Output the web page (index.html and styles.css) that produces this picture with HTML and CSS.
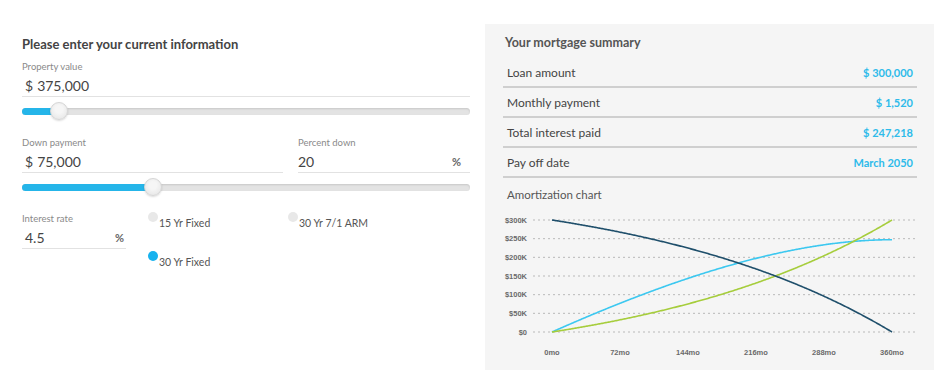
FILE: index.html
```html
<!DOCTYPE html>
<html lang="en">
<head>
  <meta charset="UTF-8">
  <title>Mortgage Calculator</title>
  <link rel="stylesheet" href="styles.css">
</head>
<body>
  <div class="page">

    <!-- Inputs -->
    <section class="form">
      <h2 class="form-title">Please enter your current information</h2>

      <div class="field">
        <label class="field-label">Property value</label>
        <div class="field-value"><span class="cur">$</span> 375,000</div>
      </div>
      <div class="slider">
        <div class="slider-track">
          <div class="slider-fill" style="width: 37px"></div>
        </div>
        <div class="slider-thumb" style="left: 37px"></div>
      </div>

      <div class="field-row">
        <div class="field down-field">
          <label class="field-label">Down payment</label>
          <div class="field-value"><span class="cur">$</span> 75,000</div>
        </div>
        <div class="field percent-field">
          <label class="field-label">Percent down</label>
          <div class="field-value">20 <span class="unit">%</span></div>
        </div>
      </div>
      <div class="slider">
        <div class="slider-track">
          <div class="slider-fill" style="width: 131px"></div>
        </div>
        <div class="slider-thumb" style="left: 131px"></div>
      </div>

      <div class="rate-row">
        <div class="field rate-field">
          <label class="field-label">Interest rate</label>
          <div class="field-value">4.5 <span class="unit">%</span></div>
        </div>
        <div class="options">
          <div class="option"><span class="dot"></span>15 Yr Fixed</div>
          <div class="option"><span class="dot"></span>30 Yr 7/1 ARM</div>
          <div class="option"><span class="dot on"></span>30 Yr Fixed</div>
        </div>
      </div>
    </section>

    <!-- Summary -->
    <section class="summary">
      <h3 class="summary-title">Your mortgage summary</h3>
      <div class="sum-row"><span>Loan amount</span><b>$ 300,000</b></div>
      <div class="sum-row"><span>Monthly payment</span><b>$ 1,520</b></div>
      <div class="sum-row"><span>Total interest paid</span><b>$ 247,218</b></div>
      <div class="sum-row"><span>Pay off date</span><b>March 2050</b></div>

      <h3 class="chart-title">Amortization chart</h3>
      <svg class="chart" id="chart" width="414" height="158" viewBox="503 206 414 158"></svg>
    </section>

  </div>

  <script>
    const svg = document.getElementById('chart');
    const NS = 'http://www.w3.org/2000/svg';
    const x0 = 552, x1 = 892, yTop = 220, yBot = 332;

    function add(tag, attrs, text) {
      const el = document.createElementNS(NS, tag);
      for (const k in attrs) el.setAttribute(k, attrs[k]);
      if (text) el.textContent = text;
      svg.appendChild(el);
      return el;
    }

    // grid + y labels
    const yLabels = ['$0', '$50K', '$100K', '$150K', '$200K', '$250K', '$300K'];
    yLabels.forEach((t, i) => {
      const y = yBot - i * (yBot - yTop) / 6;
      add('line', { x1: 533, x2: 915, y1: y, y2: y, class: 'grid' });
      add('text', { x: 527, y: y + 2.6, class: 'ylab' }, t);
    });

    // x labels
    for (let i = 0; i <= 5; i++) {
      const x = x0 + i * (x1 - x0) / 5;
      add('text', { x: x, y: 355, class: 'xlab' }, (i * 72) + 'mo');
    }

    // amortization: 300k, 4.5%, 30 yrs
    const P = 300000, r = 0.045 / 12, n = 360;
    const M = P * r / (1 - Math.pow(1 + r, -n));
    let bal = P, interest = 0;
    const pts = { bal: [], int: [], prin: [] };
    const px = k => x0 + k / n * (x1 - x0);
    const py = v => yBot - v / 300000 * (yBot - yTop);
    for (let k = 0; k <= n; k++) {
      pts.bal.push(px(k) + ',' + py(bal));
      pts.int.push(px(k) + ',' + py(interest));
      pts.prin.push(px(k) + ',' + py(P - bal));
      const i = bal * r;
      interest += i;
      bal = Math.max(0, bal - (M - i));
    }
    add('polyline', { points: pts.int.join(' '), class: 'line line-int' });
    add('polyline', { points: pts.prin.join(' '), class: 'line line-prin' });
    add('polyline', { points: pts.bal.join(' '), class: 'line line-bal' });
  </script>
</body>
</html>
```

FILE: styles.css
```css
body {
  margin: 0;
  font-family: 'Lato', 'Open Sans', sans-serif;
  background-color: #fff;
  color: #333;
}

.page {
  display: flex;
  align-items: flex-start;
}

/* ---------- left form ---------- */

.form {
  width: 448px;
  margin-left: 22px;
  padding-top: 36px;
}

.form-title {
  font-size: 13px;
  line-height: 16px;
  font-weight: 700;
  color: #444;
  margin: 0 0 9px;
}

.field-label {
  display: block;
  font-size: 9.5px;
  line-height: 12px;
  color: #8a8a8a;
}

.field-value {
  display: flex;
  align-items: center;
  font-size: 14px;
  line-height: 18px;
  color: #444;
  margin-top: 4px;
  padding-left: 3px;
  border-bottom: 1px solid #e2e2e2;
  padding-bottom: 1px;
}

.field-value .cur {
  margin-right: 4px;
}

.field-value .unit {
  margin-left: auto;
  font-size: 11px;
  font-weight: 700;
  color: #666;
  padding-right: 9px;
}

.rate-field .field-value .unit {
  padding-right: 2px;
}

.slider {
  position: relative;
  height: 20px;
  margin: 4px 0 16px;
  display: flex;
  align-items: center;
}

.slider-track {
  width: 100%;
  height: 7px;
  border-radius: 4px;
  background-color: #e3e3e3;
  box-shadow: inset 0 1px 2px rgba(0, 0, 0, 0.12);
  overflow: hidden;
}

.slider-fill {
  height: 100%;
  background-color: #25b5e9;
}

.slider-thumb {
  position: absolute;
  top: 1px;
  width: 18px;
  height: 18px;
  margin-left: -9px;
  border-radius: 50%;
  background: radial-gradient(circle at 50% 40%, #f6f6f6 30%, #e2e2e2 100%);
  border: 1px solid #d6d6d6;
  box-sizing: border-box;
  box-shadow: 0 1px 2px rgba(0, 0, 0, 0.15);
}

.field-row {
  display: flex;
  gap: 15px;
}

.down-field {
  width: 261px;
}

.percent-field {
  flex: 1;
}

.percent-field .field-value {
  padding-left: 0;
}

.rate-row {
  display: flex;
  margin-top: 10px;
}

.rate-field {
  width: 104px;
}

.options {
  display: grid;
  grid-template-columns: 140px 140px;
  row-gap: 22px;
  margin-left: 22px;
}

.option {
  display: flex;
  align-items: flex-start;
  font-size: 10.5px;
  line-height: 14px;
  color: #555;
  padding-top: 3px;
}

.dot {
  width: 10px;
  height: 10px;
  border-radius: 50%;
  background-color: #e8e8e8;
  margin: -4px 1px 0 0;
}

.dot.on {
  background-color: #17b2ee;
}

/* ---------- summary panel ---------- */

.summary {
  width: 449px;
  min-height: 346px;
  margin: 24px 0 0 15px;
  padding: 11px 17px 0 18px;
  box-sizing: border-box;
  background-color: #f5f5f5;
}

.summary-title {
  font-size: 12.5px;
  line-height: 16px;
  font-weight: 700;
  color: #555;
  margin: 0 0 7px 2px;
}

.sum-row {
  display: flex;
  justify-content: space-between;
  align-items: center;
  height: 28px;
  padding: 0 4px;
  border-bottom: 2px solid #cfcfcf;
  font-size: 12px;
  color: #444;
}

.sum-row b {
  color: #2ebbea;
  font-size: 11px;
  font-weight: 700;
}

.chart-title {
  font-size: 11.5px;
  font-weight: 400;
  line-height: 16px;
  color: #555;
  margin: 9px 0 3px 4px;
}

.chart {
  display: block;
}

.grid {
  stroke: #b9b9b9;
  stroke-width: 1;
  stroke-dasharray: 2 3;
}

.ylab,
.xlab {
  font-family: 'Liberation Sans', sans-serif;
  font-size: 7.5px;
  font-weight: 700;
  fill: #6a6a6a;
}

.ylab {
  text-anchor: end;
}

.xlab {
  text-anchor: middle;
}

.line {
  fill: none;
  stroke-width: 1.6;
}

.line-int {
  stroke: #3cc8f0;
}

.line-prin {
  stroke: #a6cd3c;
}

.line-bal {
  stroke: #1f4f6b;
}
```
